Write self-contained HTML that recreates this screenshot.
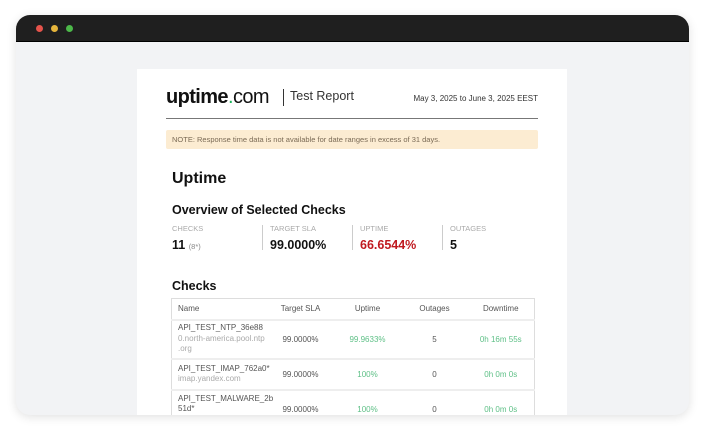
<!DOCTYPE html>
<html><head><meta charset="utf-8"><style>
*{margin:0;padding:0;box-sizing:border-box}
body{width:705px;height:430px;background:#fff;font-family:"Liberation Sans",sans-serif;position:relative;overflow:hidden}
.frame{position:absolute;left:16px;top:15px;width:673px;height:400px;border-radius:14px;overflow:hidden;background:#f2f3f5;box-shadow:0 2px 10px rgba(0,0,0,.12)}
.bar{height:27px;background:#1f1f1f;border-bottom:1px solid #000;position:relative}
.dot{position:absolute;top:10px;width:7px;height:7px;border-radius:50%}
.card{position:absolute;left:121px;top:54px;width:430px;height:400px;background:#fff;overflow:hidden}
.abs{position:absolute;white-space:nowrap}
.logo{left:29px;top:17px;font-size:20px;color:#111;letter-spacing:-.6px}
.logo b{font-weight:bold}
.g{color:#1bb55c}
.sep{left:146px;top:20px;width:1px;height:17px;background:#333}
.tr{left:153px;top:20px;font-size:12.5px;color:#333}
.date{right:29px;top:25px;font-size:8px;color:#333}
.hr{left:29px;top:49px;width:372px;height:1px;background:#777}
.note{left:29px;top:61px;width:372px;height:19px;background:#fcecd2;border-radius:2px;font-size:7.5px;color:#7a6a55;padding:5px 6px}
.h1{left:35px;top:101px;font-size:16px;font-weight:bold;color:#111}
.h2{left:35px;top:134px;font-size:12.5px;font-weight:bold;color:#111}
.lab{top:155px;font-size:7.5px;color:#aaa}
.val{top:169px;font-size:12.5px;font-weight:bold;color:#111}
.vs{top:156px;width:1px;height:25px;background:#ccc}
table{position:absolute;left:34px;top:229px;width:363px;border-collapse:collapse;font-size:8px;color:#555;border:1px solid #ddd;table-layout:fixed}
td,th{border-bottom:2px solid #eee;font-weight:normal;text-align:center;padding:0 2px}
th{height:21px}
td:first-child,th:first-child{text-align:left;padding-left:6px;line-height:10.5px}
.gr{color:#5fc087}.lt{color:#aaa}
</style></head><body>
<div class="frame">
<div class="bar"><div class="dot" style="left:20px;background:#e5534b"></div><div class="dot" style="left:35px;background:#e6b53c"></div><div class="dot" style="left:50px;background:#4cb849"></div></div>
<div class="card">
<div class="abs logo"><b>uptime</b><span class="g">.</span>com</div>
<div class="abs sep"></div>
<div class="abs tr">Test Report</div>
<div class="abs date">May 3, 2025 to June 3, 2025 EEST</div>
<div class="abs hr"></div>
<div class="abs note">NOTE: Response time data is not available for date ranges in excess of 31 days.</div>
<div class="abs h1">Uptime</div>
<div class="abs h2">Overview of Selected Checks</div>
<div class="abs lab" style="left:35px">CHECKS</div>
<div class="abs lab" style="left:133px">TARGET SLA</div>
<div class="abs lab" style="left:223px">UPTIME</div>
<div class="abs lab" style="left:313px">OUTAGES</div>
<div class="abs vs" style="left:125px"></div>
<div class="abs vs" style="left:215px"></div>
<div class="abs vs" style="left:305px"></div>
<div class="abs val" style="left:35px">11 <span style="font-size:7.5px;color:#888;font-weight:normal">(8*)</span></div>
<div class="abs val" style="left:133px">99.0000%</div>
<div class="abs val" style="left:223px;color:#c0191f">66.6544%</div>
<div class="abs val" style="left:313px">5</div>
<div class="abs h2" style="top:210px">Checks</div>
<table>
<colgroup><col style="width:96px"><col style="width:66px"><col style="width:68px"><col style="width:66px"><col style="width:67px"></colgroup>
<tr><th>Name</th><th>Target SLA</th><th>Uptime</th><th>Outages</th><th>Downtime</th></tr>
<tr style="height:39px"><td>API_TEST_NTP_36e88<br><span class="lt">0.north-america.pool.ntp<br>.org</span></td><td>99.0000%</td><td class="gr">99.9633%</td><td>5</td><td class="gr">0h 16m 55s</td></tr>
<tr style="height:31px"><td>API_TEST_IMAP_762a0*<br><span class="lt">imap.yandex.com</span></td><td>99.0000%</td><td class="gr">100%</td><td>0</td><td class="gr">0h 0m 0s</td></tr>
<tr style="height:40px"><td>API_TEST_MALWARE_2b<br>51d*<br>&nbsp;</td><td>99.0000%</td><td class="gr">100%</td><td>0</td><td class="gr">0h 0m 0s</td></tr>
</table>
</div>
</div>
</body></html>
